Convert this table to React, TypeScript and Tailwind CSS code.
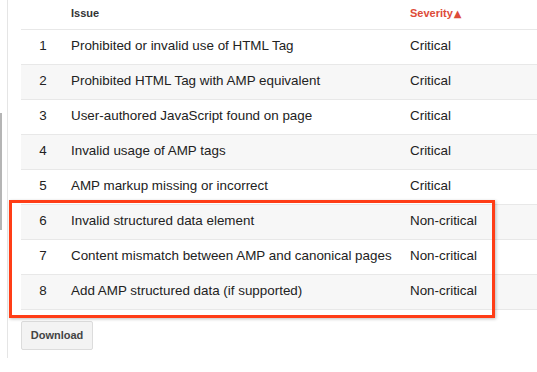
const ROWS: { n: number; issue: string; severity: string }[] = [
  { n: 1, issue: 'Prohibited or invalid use of HTML Tag', severity: 'Critical' },
  { n: 2, issue: 'Prohibited HTML Tag with AMP equivalent', severity: 'Critical' },
  { n: 3, issue: 'User-authored JavaScript found on page', severity: 'Critical' },
  { n: 4, issue: 'Invalid usage of AMP tags', severity: 'Critical' },
  { n: 5, issue: 'AMP markup missing or incorrect', severity: 'Critical' },
  { n: 6, issue: 'Invalid structured data element', severity: 'Non-critical' },
  { n: 7, issue: 'Content mismatch between AMP and canonical pages', severity: 'Non-critical' },
  { n: 8, issue: 'Add AMP structured data (if supported)', severity: 'Non-critical' },
]

export default function App() {
  return (
    <div className="relative h-[372px] w-[537px] overflow-hidden bg-white font-['Liberation_Sans',Arial,sans-serif] text-[#222]">
      {/* scrollbar sliver on the far left */}
      <div className="absolute left-0 top-[113px] h-[117px] w-[2px] bg-[#b5b5b5]" />

      <div className="ml-[7px] h-[358px] border-l border-[#e5e5e5] pl-[13px]">
        <table className="w-[516px] border-collapse text-[13.4px]">
          <thead>
            <tr className="h-[29px] border-b border-[#e8e8e8]">
              <th className="w-[44px]" />
              <th className="w-[339px] pb-[2px] pl-[6px] text-left text-[11px] font-bold text-[#333]">Issue</th>
              <th className="pb-[2px] pl-[6px] text-left text-[11px] font-bold text-[#dd4b39]">
                Severity<span className="ml-px font-['DejaVu_Sans',sans-serif] text-[10px]">▲</span>
              </th>
            </tr>
          </thead>
          <tbody>
            {ROWS.map((r) => (
              <tr key={r.n} className={`h-[35px] border-b border-[#e8e8e8] ${r.n % 2 === 0 ? 'bg-[#f7f7f7]' : 'bg-white'}`}>
                <td className="pb-[1px] text-center">{r.n}</td>
                <td className="pb-[1px] pl-[6px]">{r.issue}</td>
                <td className="pb-[1px] pl-[6px]">{r.severity}</td>
              </tr>
            ))}
          </tbody>
        </table>
        <button
          type="button"
          className="mt-[11px] h-[29px] w-[72px] rounded-[2px] border border-[#dcdcdc] bg-[#f3f3f3] text-[11px] font-bold text-[#444]"
        >
          Download
        </button>
      </div>

      {/* highlight annotation over rows 6–8 */}
      <div className="pointer-events-none absolute left-[9px] top-[200px] h-[118px] w-[486px] border-[3px] border-[#ff3d17] shadow-[1px_1px_3px_rgba(0,0,0,0.25)]" />
    </div>
  )
}
